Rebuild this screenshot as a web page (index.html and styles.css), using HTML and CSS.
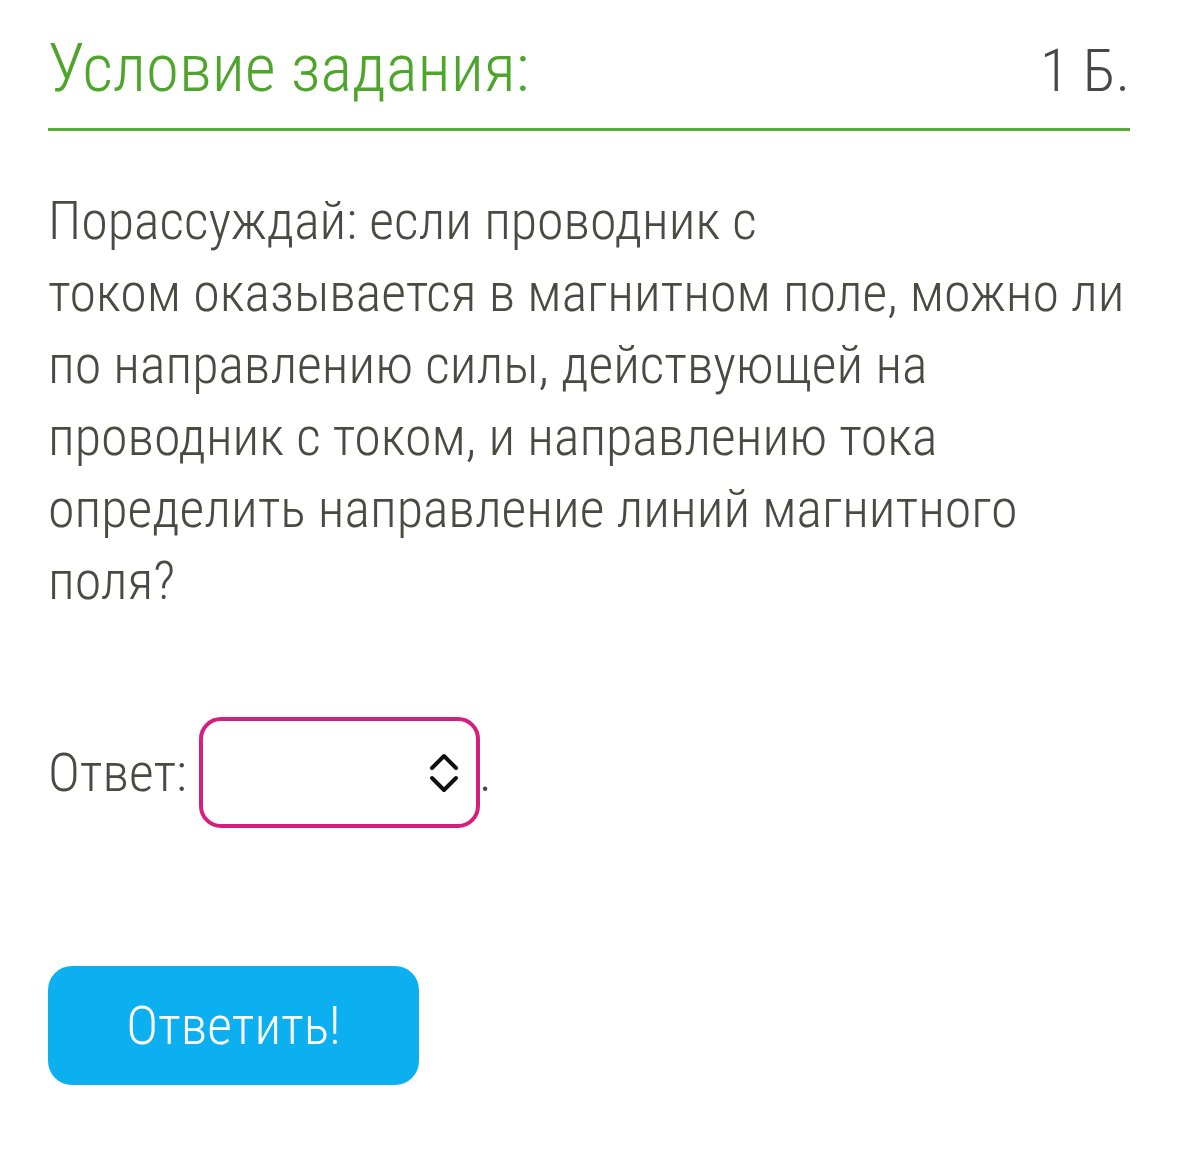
FILE: index.html
```html
<!DOCTYPE html>
<html lang="ru">

<head>
    <meta charset="UTF-8">
    <meta name="viewport" content="width=device-width, initial-scale=1.0">
    <title>Условие задания</title>
    <link rel="stylesheet" href="styles.css">
</head>

<body>
    <div class="task">
        <div class="task__header">
            <h1 class="task__title">Условие задания:</h1>
            <span class="task__points">1 Б.</span>
        </div>

        <p class="task__text">
            Порассуждай: если проводник с<br>
            током оказывается в магнитном поле, можно ли по направлению силы, действующей на проводник с током, и
            направлению тока определить направление линий магнитного поля?
        </p>

        <div class="task__answer">
            <span class="task__answer__label">Ответ:</span>
            <div class="select">
                <svg class="select__icon" viewBox="0 0 32 44" width="32" height="44">
                    <path d="M4 17 L16 5 L28 17" fill="none" stroke="#111" stroke-width="4"
                        stroke-linecap="round" stroke-linejoin="round" />
                    <path d="M4 27 L16 39 L28 27" fill="none" stroke="#111" stroke-width="4"
                        stroke-linecap="round" stroke-linejoin="round" />
                </svg>
            </div>
            <span class="task__answer__dot">.</span>
        </div>

        <button class="button">Ответить!</button>
    </div>
</body>

</html>
```

FILE: styles.css
```css
*,
*::before,
*::after {
    box-sizing: border-box;
    margin: 0;
    padding: 0;
}

body {
    font-family: Roboto, "Noto Sans", sans-serif;
    font-weight: 300;
    font-stretch: condensed;
    color: #4a4a43;
    background-color: white;
}

.task {
    padding: 24px 49px 0 48px;
}

.task__header {
    display: flex;
    justify-content: space-between;
    align-items: baseline;
    padding-bottom: 16px;
    border-bottom: 3px solid #55ad34;
}

.task__title {
    font-size: 67px;
    font-weight: 300;
    line-height: 88px;
    color: #4ea52b;
}

.task__points {
    font-size: 60px;
    color: #474747;
}

.task__text {
    margin-top: 54px;
    font-size: 54px;
    line-height: 72px;
}

.task__answer {
    display: flex;
    align-items: center;
    margin-top: 100px;
    font-size: 54px;
}

.task__answer__label {
    margin-right: 12px;
}

.select {
    display: flex;
    align-items: center;
    justify-content: flex-end;
    width: 281px;
    height: 111px;
    padding-right: 16px;
    border: 4px solid #d41f7f;
    border-radius: 22px;
}

.task__answer__dot {
    margin-left: -1px;
    align-self: flex-end;
    padding-bottom: 28px;
    line-height: 1;
}

.button {
    display: block;
    margin-top: 138px;
    width: 371px;
    height: 119px;
    border: none;
    border-radius: 24px;
    background-color: #0cb0f1;
    color: white;
    font-family: inherit;
    font-weight: 300;
    font-stretch: condensed;
    font-size: 54px;
    cursor: pointer;
}
```
